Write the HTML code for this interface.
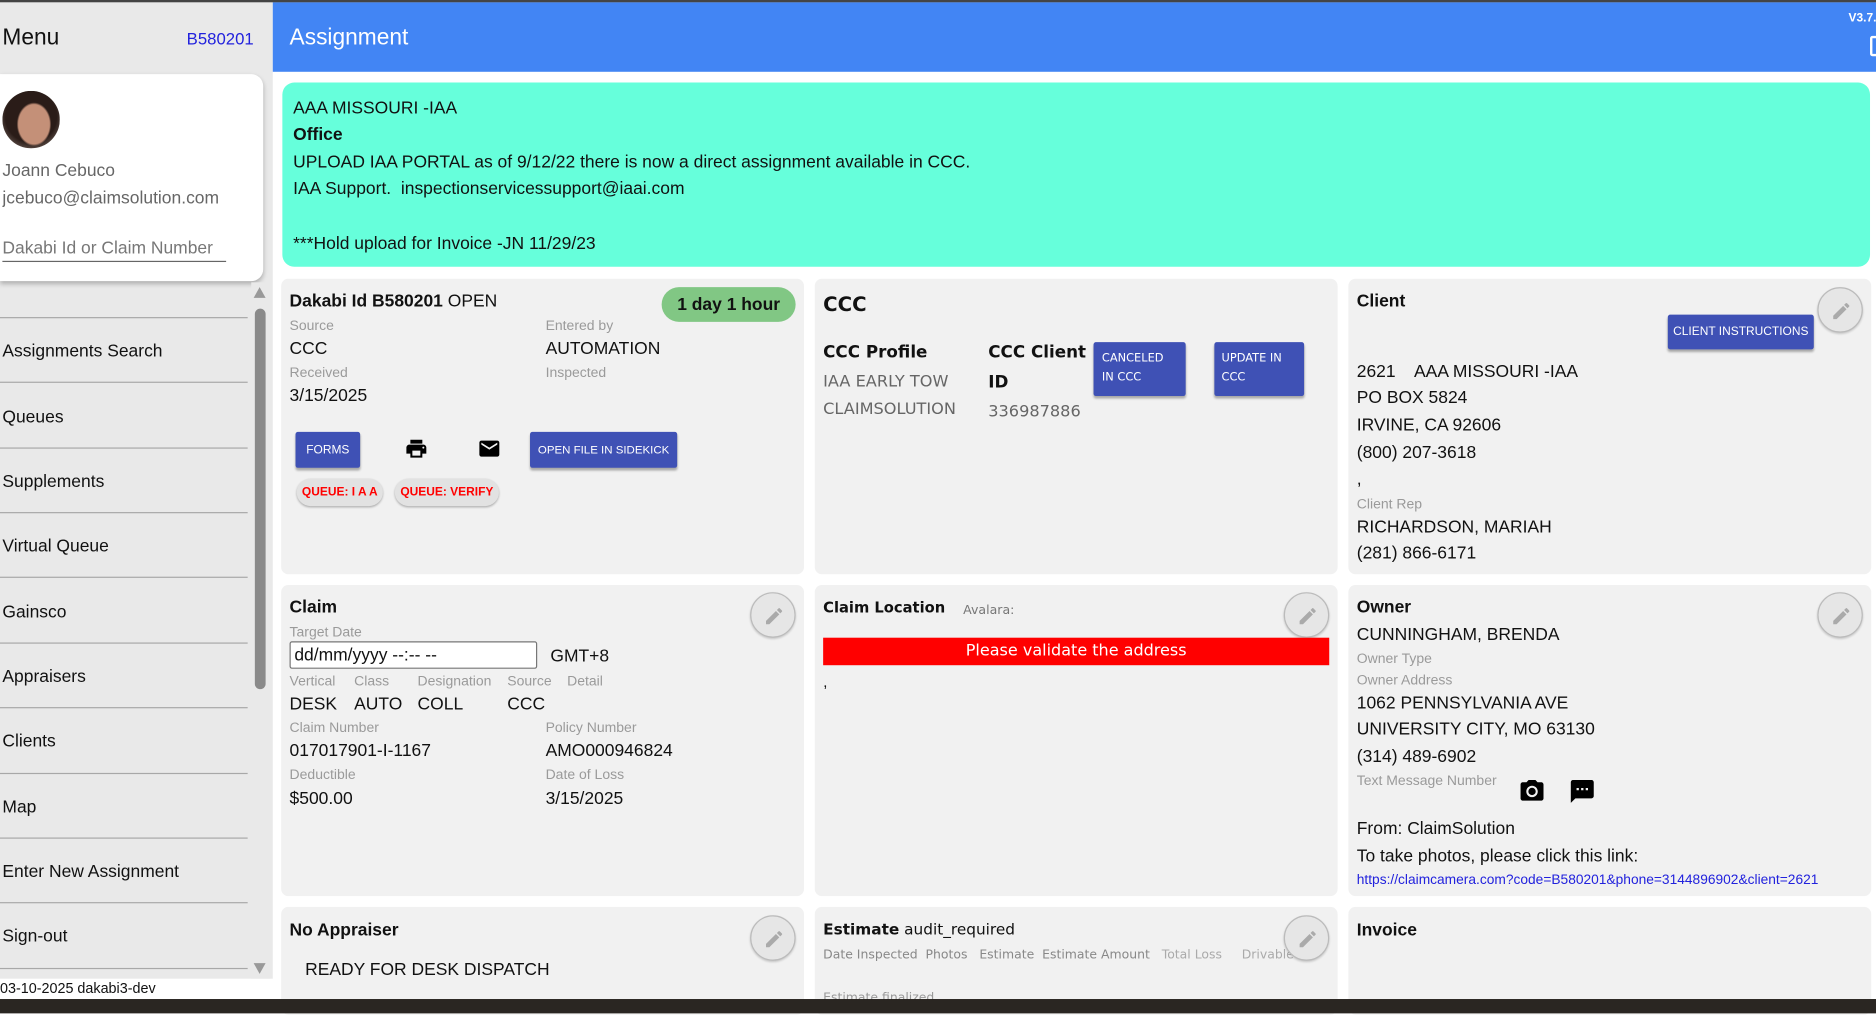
<!DOCTYPE html>
<html><head><meta charset="utf-8"><style>
*{margin:0;padding:0;box-sizing:border-box}
html,body{width:1876px;height:1008px;overflow:hidden;background:#fff}
#w{position:absolute;left:0;top:0;width:1568px;height:843px;transform:scale(1.19643);transform-origin:0 0;font-family:"Liberation Sans",Arial,sans-serif;color:#111}
.a{position:absolute;white-space:nowrap;line-height:20px;margin-top:1.5px}
.lbl{font-size:11.7px;color:#9a9a9a}
.v{font-size:14.6px;color:#111}
.b{font-weight:bold}
.card{position:absolute;background:#f1f1f1;border-radius:6px}
.btn{position:absolute;background:#3f51b5;color:#fff;font-size:10px;border-radius:2px;box-shadow:0 2px 2px rgba(0,0,0,.3);display:flex;align-items:center;justify-content:center}
.edit{position:absolute;width:38px;height:38px;border-radius:50%;border:1px solid #bbb;background:#e6e6e6;box-shadow:0 1px 2px rgba(0,0,0,.2)}
.edit svg{position:absolute;left:10px;top:10px}
.mi{position:absolute;left:0;width:207px;border-top:1px solid #a8a8a8}
.dv{font-family:"DejaVu Sans",sans-serif}
</style></head><body><div id="w">
<div style="position:absolute;left:0;top:0;width:1568px;height:2px;background:#444"></div>
<!-- sidebar -->
<div style="position:absolute;left:0;top:2px;width:228px;height:816px;background:#e9e9e9"></div>
<div class="a" style="left:2px;top:19px;font-size:19px;line-height:22px">Menu</div>
<div class="a" style="left:156px;top:20px;font-size:14px;color:#2222dd">B580201</div>
<div style="position:absolute;left:0;top:62px;width:220px;height:173px;background:#fff;border-radius:0 10px 10px 0;box-shadow:0 2px 4px rgba(0,0,0,.25)"></div>
<div style="position:absolute;left:2px;top:76px;width:48px;height:48px;border-radius:50%;background:radial-gradient(ellipse 30% 38% at 55% 58%,#c49078 0 90%,transparent 100%),radial-gradient(circle at 50% 45%,#2a1c18 0 60%,#9a8a80 100%)"></div>
<div class="a" style="left:2px;top:131px;font-size:14.6px;color:#666">Joann Cebuco</div>
<div class="a" style="left:2px;top:154px;font-size:14.6px;color:#666;width:188px;overflow:hidden">jcebuco@claimsolution.com</div>
<div class="a" style="left:2px;top:196px;font-size:14.6px;color:#777">Dakabi Id or Claim Number</div>
<div style="position:absolute;left:2px;top:218px;width:187px;height:1px;background:#666"></div>
<div style="position:absolute;left:210px;top:236px;width:16px;height:582px;background:#e9e9e9"></div>
<div style="position:absolute;left:212px;top:240px;width:0;height:0;border-left:5px solid transparent;border-right:5px solid transparent;border-bottom:9px solid #999"></div>
<div style="position:absolute;left:213px;top:258px;width:9px;height:318px;background:#8a8a8a;border-radius:5px"></div>
<div style="position:absolute;left:212px;top:805px;width:0;height:0;border-left:5px solid transparent;border-right:5px solid transparent;border-top:9px solid #999"></div>
<div class="mi" style="top:265px"></div><div class="mi" style="top:319px"></div><div class="mi" style="top:374px"></div><div class="mi" style="top:428px"></div><div class="mi" style="top:482px"></div><div class="mi" style="top:537px"></div><div class="mi" style="top:591px"></div><div class="mi" style="top:646px"></div><div class="mi" style="top:700px"></div><div class="mi" style="top:754px"></div><div class="mi" style="top:809px"></div>
<div class="a v" style="left:2px;top:282px">Assignments Search</div>
<div class="a v" style="left:2px;top:337px">Queues</div>
<div class="a v" style="left:2px;top:391px">Supplements</div>
<div class="a v" style="left:2px;top:445px">Virtual Queue</div>
<div class="a v" style="left:2px;top:500px">Gainsco</div>
<div class="a v" style="left:2px;top:554px">Appraisers</div>
<div class="a v" style="left:2px;top:608px">Clients</div>
<div class="a v" style="left:2px;top:663px">Map</div>
<div class="a v" style="left:2px;top:717px">Enter New Assignment</div>
<div class="a v" style="left:2px;top:771px">Sign-out</div>
<div class="a" style="left:0;top:817px;font-size:12px;line-height:18px;margin-top:0">03-10-2025 dakabi3-dev</div>
<!-- header -->
<div style="position:absolute;left:228px;top:2px;width:1340px;height:58px;background:#4285f4"></div>
<div class="a" style="left:242px;top:19px;font-size:19px;line-height:22px;color:#fff">Assignment</div>
<div class="a b" style="left:1545px;top:8px;font-size:10px;line-height:12px;color:#fff">V3.7.</div>
<div style="position:absolute;left:1563px;top:30px;width:8px;height:17px;border:2px solid #fff;border-radius:2px"></div>
<!-- notice -->
<div style="position:absolute;left:236px;top:69px;width:1327px;height:154px;background:#66ffdb;border-radius:10px"></div>
<div class="a v" style="left:245px;top:79px">AAA MISSOURI -IAA</div>
<div class="a v b" style="left:245px;top:101px">Office</div>
<div class="a v" style="left:245px;top:124px">UPLOAD IAA PORTAL as of 9/12/22 there is now a direct assignment available in CCC.</div>
<div class="a v" style="left:245px;top:146px">IAA Support.&nbsp; inspectionservicessupport@iaai.com</div>
<div class="a v" style="left:245px;top:192px">***Hold upload for Invoice -JN 11/29/23</div>
<!-- cards -->
<div class="card" style="left:235px;top:233px;width:437px;height:247px"></div>
<div class="card" style="left:681px;top:233px;width:437px;height:247px"></div>
<div class="card" style="left:1127px;top:233px;width:437px;height:247px"></div>
<div class="card" style="left:235px;top:489px;width:437px;height:260px"></div>
<div class="card" style="left:681px;top:489px;width:437px;height:260px"></div>
<div class="card" style="left:1127px;top:489px;width:437px;height:260px"></div>
<div class="card" style="left:235px;top:758px;width:437px;height:90px"></div>
<div class="card" style="left:681px;top:758px;width:437px;height:90px"></div>
<div class="card" style="left:1127px;top:758px;width:437px;height:90px"></div>
<!-- card 1 -->
<div class="a v" style="left:242px;top:240px"><b>Dakabi Id B580201</b> OPEN</div>
<div style="position:absolute;left:553px;top:240px;width:112px;height:29px;border-radius:15px;background:#81c784;font-size:14.6px;font-weight:bold;display:flex;align-items:center;justify-content:center">1 day 1 hour</div>
<div class="a lbl" style="left:242px;top:261px">Source</div>
<div class="a lbl" style="left:456px;top:261px">Entered by</div>
<div class="a v" style="left:242px;top:280px">CCC</div>
<div class="a v" style="left:456px;top:280px">AUTOMATION</div>
<div class="a lbl" style="left:242px;top:300px">Received</div>
<div class="a lbl" style="left:456px;top:300px">Inspected</div>
<div class="a v" style="left:242px;top:319px">3/15/2025</div>
<div class="btn" style="left:247px;top:361px;width:54px;height:30px">FORMS</div>
<svg style="position:absolute;left:338px;top:365px" width="20" height="20" viewBox="0 0 24 24"><path d="M19 8H5c-1.66 0-3 1.34-3 3v6h4v4h12v-4h4v-6c0-1.66-1.34-3-3-3zm-3 11H8v-5h8v5zm3-7c-.55 0-1-.45-1-1s.45-1 1-1 1 .45 1 1-.45 1-1 1zm-1-9H6v4h12V3z"/></svg>
<svg style="position:absolute;left:399px;top:365px" width="20" height="20" viewBox="0 0 24 24"><path d="M20 4H4c-1.1 0-2 .9-2 2v12c0 1.1.9 2 2 2h16c1.1 0 2-.9 2-2V6c0-1.1-.9-2-2-2zm0 4l-8 5-8-5V6l8 5 8-5v2z"/></svg>
<div class="btn" style="left:443px;top:361px;width:123px;height:30px;font-size:9.6px">OPEN FILE IN SIDEKICK</div>
<div style="position:absolute;left:248px;top:400px;width:72px;height:23px;border-radius:12px;background:#e2e2e2;box-shadow:0 1px 2px rgba(0,0,0,.3);color:#f00;font-size:10px;font-weight:bold;display:flex;align-items:center;justify-content:center">QUEUE: I A A</div>
<div style="position:absolute;left:330px;top:400px;width:87px;height:23px;border-radius:12px;background:#e2e2e2;box-shadow:0 1px 2px rgba(0,0,0,.3);color:#f00;font-size:10px;font-weight:bold;display:flex;align-items:center;justify-content:center">QUEUE: VERIFY</div>
<!-- CCC card -->
<div class="a dv b" style="left:688px;top:243px;font-size:16.5px">CCC</div>
<div class="a dv b" style="left:688px;top:283px;font-size:14px">CCC Profile</div>
<div class="a dv" style="left:688px;top:307px;font-size:13.5px;color:#666">IAA EARLY TOW</div>
<div class="a dv" style="left:688px;top:330px;font-size:13.5px;color:#666">CLAIMSOLUTION</div>
<div class="a dv b" style="left:826px;top:283px;font-size:14px">CCC Client</div>
<div class="a dv b" style="left:826px;top:308px;font-size:14px">ID</div>
<div class="a dv" style="left:826px;top:332px;font-size:13.5px;color:#666">336987886</div>
<div class="btn dv" style="left:914px;top:286px;width:77px;height:45px;font-size:9.5px;display:block;padding:6px 0 0 7px;line-height:16px">CANCELED<br>IN CCC</div>
<div class="btn dv" style="left:1015px;top:286px;width:75px;height:45px;font-size:9.5px;display:block;padding:6px 0 0 6px;line-height:16px">UPDATE IN<br>CCC</div>
<!-- Client -->
<div class="a v b" style="left:1134px;top:240px">Client</div>
<div class="btn" style="left:1394px;top:263px;width:122px;height:29px">CLIENT INSTRUCTIONS</div>
<div class="edit" style="left:1519px;top:240px"><svg width="18" height="18" viewBox="0 0 24 24"><path fill="#aaa" d="M3 17.25V21h3.75L17.81 9.94l-3.75-3.75L3 17.25zM20.71 7.04a1 1 0 000-1.41l-2.34-2.34a1 1 0 00-1.410 0l-1.83 1.83 3.75 3.75 1.83-1.83z"/></svg></div>
<div class="a v" style="left:1134px;top:299px">2621&nbsp;&nbsp;&nbsp; AAA MISSOURI -IAA</div>
<div class="a v" style="left:1134px;top:321px">PO BOX 5824</div>
<div class="a v" style="left:1134px;top:344px">IRVINE, CA 92606</div>
<div class="a v" style="left:1134px;top:367px">(800) 207-3618</div>
<div class="a v" style="left:1134px;top:389px">,</div>
<div class="a lbl" style="left:1134px;top:410px">Client Rep</div>
<div class="a v" style="left:1134px;top:429px">RICHARDSON, MARIAH</div>
<div class="a v" style="left:1134px;top:451px">(281) 866-6171</div>
<!-- Claim -->
<div class="a v b" style="left:242px;top:496px">Claim</div>
<div class="edit" style="left:627px;top:495px"><svg width="18" height="18" viewBox="0 0 24 24"><path fill="#aaa" d="M3 17.25V21h3.75L17.81 9.94l-3.75-3.75L3 17.25zM20.71 7.04a1 1 0 000-1.41l-2.340-2.34a1 1 0 00-1.41 0l-1.83 1.83 3.75 3.75 1.83-1.83z"/></svg></div>
<div class="a lbl" style="left:242px;top:517px">Target Date</div>
<div style="position:absolute;left:242px;top:536px;width:207px;height:23px;background:#fff;border:1px solid #777;border-radius:2px;font-size:14.6px;line-height:22px;padding-left:3px">dd/mm/yyyy --:-- --</div>
<div class="a v" style="left:460px;top:537px">GMT+8</div>
<div class="a lbl" style="left:242px;top:558px">Vertical</div><div class="a lbl" style="left:296px;top:558px">Class</div><div class="a lbl" style="left:349px;top:558px">Designation</div><div class="a lbl" style="left:424px;top:558px">Source</div><div class="a lbl" style="left:474px;top:558px">Detail</div>
<div class="a v" style="left:242px;top:577px">DESK</div><div class="a v" style="left:296px;top:577px">AUTO</div><div class="a v" style="left:349px;top:577px">COLL</div><div class="a v" style="left:424px;top:577px">CCC</div>
<div class="a lbl" style="left:242px;top:597px">Claim Number</div><div class="a lbl" style="left:456px;top:597px">Policy Number</div>
<div class="a v" style="left:242px;top:616px">017017901-I-1167</div><div class="a v" style="left:456px;top:616px">AMO000946824</div>
<div class="a lbl" style="left:242px;top:636px">Deductible</div><div class="a lbl" style="left:456px;top:636px">Date of Loss</div>
<div class="a v" style="left:242px;top:656px">$500.00</div><div class="a v" style="left:456px;top:656px">3/15/2025</div>
<!-- Claim location -->
<div class="a dv b" style="left:688px;top:496px;font-size:12.3px">Claim Location</div>
<div class="a dv" style="left:805px;top:498px;font-size:10.5px;color:#777">Avalara:</div>
<div class="edit" style="left:1073px;top:495px"><svg width="18" height="18" viewBox="0 0 24 24"><path fill="#aaa" d="M3 17.25V21h3.75L17.81 9.94l-3.75-3.75L3 17.25zM20.71 7.04a1 1 0 000-1.41l-2.34-2.34a1 1 0 00-1.41 0l-1.83 1.83 3.75 3.75 1.83-1.83z"/></svg></div>
<div class="dv" style="position:absolute;left:688px;top:533px;width:423px;height:23px;background:#f00;color:#fff;font-size:13.4px;text-align:center;line-height:23px">Please validate the address</div>
<div class="a" style="left:688px;top:558px;font-size:13px">,</div>
<!-- Owner -->
<div class="a v b" style="left:1134px;top:496px">Owner</div>
<div class="edit" style="left:1519px;top:495px"><svg width="18" height="18" viewBox="0 0 24 24"><path fill="#aaa" d="M3 17.25V21h3.75L17.81 9.94l-3.75-3.75L3 17.25zM20.71 7.04a1 1 0 000-1.41l-2.34-2.34a1 1 0 00-1.41 0l-1.83 1.83 3.75 3.75 1.83-1.83z"/></svg></div>
<div class="a v" style="left:1134px;top:519px">CUNNINGHAM, BRENDA</div>
<div class="a lbl" style="left:1134px;top:539px">Owner Type</div>
<div class="a lbl" style="left:1134px;top:557px">Owner Address</div>
<div class="a v" style="left:1134px;top:576px">1062 PENNSYLVANIA AVE</div>
<div class="a v" style="left:1134px;top:598px">UNIVERSITY CITY, MO 63130</div>
<div class="a v" style="left:1134px;top:621px">(314) 489-6902</div>
<div class="a lbl" style="left:1134px;top:641px">Text Message Number</div>
<svg style="position:absolute;left:1269px;top:650px" width="23" height="23" viewBox="0 0 24 24"><circle cx="12" cy="12" r="3.2"/><path d="M9 2L7.17 4H4c-1.1 0-2 .9-2 2v12c0 1.1.9 2 2 2h16c1.1 0 2-.9 2-2V6c0-1.1-.9-2-2-2h-3.17L15 2H9zm3 15c-2.76 0-5-2.24-5-5s2.24-5 5-5 5 2.24 5 5-2.24 5-5 5z"/></svg>
<svg style="position:absolute;left:1311px;top:650px" width="23" height="23" viewBox="0 0 24 24"><path d="M20 2H4c-1.1 0-2 .9-2 2v18l4-4h14c1.1 0 2-.9 2-2V4c0-1.1-.9-2-2-2zM9 11H7V9h2v2zm4 0h-2V9h2v2zm4 0h-2V9h2v2z"/></svg>
<div class="a v" style="left:1134px;top:681px">From: ClaimSolution</div>
<div class="a v" style="left:1134px;top:704px">To take photos, please click this link:</div>
<div class="a" style="left:1134px;top:724px;font-size:11.5px;color:#2222dd">https://claimcamera.com?code=B580201&amp;phone=3144896902&amp;client=2621</div>
<!-- bottom row -->
<div class="a v b" style="left:242px;top:766px">No Appraiser</div>
<div class="edit" style="left:627px;top:765px"><svg width="18" height="18" viewBox="0 0 24 24"><path fill="#aaa" d="M3 17.25V21h3.75L17.81 9.94l-3.75-3.75L3 17.25zM20.71 7.04a1 1 0 000-1.41l-2.34-2.34a1 1 0 00-1.41 0l-1.83 1.83 3.75 3.75 1.83-1.83z"/></svg></div>
<div class="a v" style="left:255px;top:799px">READY FOR DESK DISPATCH</div>
<div class="a dv" style="left:688px;top:766px;font-size:12.8px"><b>Estimate</b> audit_required</div>
<div class="a dv" style="left:688px;top:786px;font-size:10.4px;color:#888">Date Inspected&nbsp; Photos&nbsp;&nbsp; Estimate&nbsp; Estimate Amount&nbsp;&nbsp; <span style="color:#aaa">Total Loss&nbsp;&nbsp;&nbsp;&nbsp; Drivable</span></div>
<div class="edit" style="left:1073px;top:765px"><svg width="18" height="18" viewBox="0 0 24 24"><path fill="#aaa" d="M3 17.25V21h3.75L17.81 9.94l-3.75-3.75L3 17.25zM20.71 7.04a1 1 0 000-1.41l-2.34-2.34a1 1 0 00-1.41 0l-1.83 1.83 3.75 3.75 1.83-1.83z"/></svg></div>
<div class="a dv" style="left:688px;top:822px;font-size:10.4px;color:#999">Estimate finalized</div>
<div class="a v b" style="left:1134px;top:766px">Invoice</div>
<div style="position:absolute;left:0;top:835px;width:1568px;height:12px;background:#2a2622"></div>
</div></body></html>
